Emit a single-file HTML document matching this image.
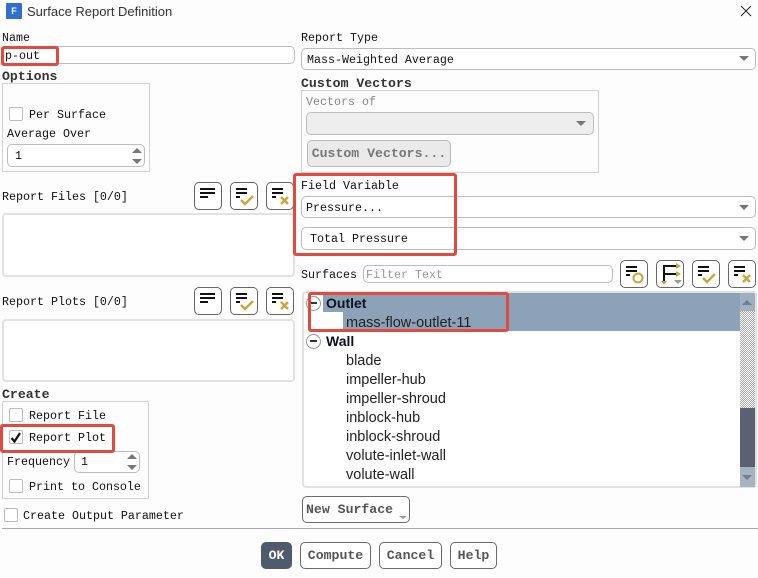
<!DOCTYPE html>
<html><head><meta charset="utf-8">
<style>
html,body{margin:0;padding:0}
body{width:758px;height:578px;position:relative;overflow:hidden;background:#fdfdfd;font-family:"Liberation Mono",monospace;font-size:11.67px;color:#111}
.a{position:absolute;box-sizing:border-box}
.t{position:absolute;line-height:14px;white-space:pre}
.b{font-weight:bold;color:#333;font-size:13.2px}
.box{position:absolute;box-sizing:border-box;border:1px solid #d2d2d2}
.inp{position:absolute;box-sizing:border-box;border:1px solid #bdbdbd;border-radius:5px;background:#fff}
.list{position:absolute;box-sizing:border-box;border:2px solid #e2e2e2;border-radius:4px;background:#fff}
.cb{position:absolute;box-sizing:border-box;width:14px;height:14px;border:1px solid #bbb;border-radius:2px;background:#fff}
.ib{position:absolute;box-sizing:border-box;width:28px;height:28px;border:1px solid #666;border-radius:5px;background:#fff}
.ib svg{position:absolute;left:-1px;top:-1px}
.btn{position:absolute;box-sizing:border-box;border:1px solid #6b6b6b;border-radius:5px;background:#fff;font-weight:bold;font-size:13.2px;color:#555;text-align:center;line-height:26px}
.tri{position:absolute;width:0;height:0;border-left:5px solid transparent;border-right:5px solid transparent;border-top:5px solid #777}
.up{position:absolute;width:0;height:0;border-left:5px solid transparent;border-right:5px solid transparent;border-bottom:5px solid #777}
.s{position:absolute;font-family:"Liberation Sans",sans-serif;font-size:14.5px;line-height:19px;color:#222;white-space:pre;margin-top:2px}
.h{font-weight:bold;font-size:14px;color:#0b1220;margin-top:1px}
.m{position:absolute;box-sizing:border-box;width:15px;height:15px;border:1px solid #999;border-radius:50%;background:#fff}
.m:after{content:"";position:absolute;left:3px;top:5px;width:7px;height:2px;background:#333}
.r{position:absolute;box-sizing:border-box;border:3px solid #e14b3f;border-radius:3px}
</style></head><body>

<!-- title bar -->
<div class="a" style="left:6px;top:3px;width:16px;height:16px;background:#2f6fd0;border-radius:1px;color:#fff;font:bold 9px/16px 'Liberation Sans',sans-serif;text-align:center">F</div>
<div class="t" style="left:27px;top:4px;font-family:'Liberation Sans',sans-serif;font-size:13px;line-height:16px;color:#333">Surface Report Definition</div>
<svg class="a" style="left:740px;top:5px" width="12" height="12"><path d="M1 1L11 11M11 1L1 11" stroke="#222" stroke-width="1" fill="none"/></svg>

<!-- left column -->
<div class="t" style="left:2px;top:31px">Name</div>
<div class="inp" style="left:2px;top:46px;width:293px;height:18px"></div>
<div class="t" style="left:5px;top:49px">p-out</div>

<div class="t b" style="left:2px;top:70px">Options</div>
<div class="box" style="left:2px;top:83px;width:148px;height:89px"></div>
<div class="cb" style="left:9px;top:107px"></div>
<div class="t" style="left:29px;top:108px">Per Surface</div>
<div class="t" style="left:7px;top:127px">Average Over</div>
<div class="inp" style="left:7px;top:144px;width:138px;height:23px"></div>
<div class="t" style="left:15px;top:149px">1</div>
<div class="up" style="left:132px;top:148px"></div>
<div class="tri" style="left:132px;top:159px"></div>

<div class="t" style="left:2px;top:190px">Report Files [0/0]</div>
<div class="ib" style="left:194px;top:182px"><svg width="28" height="28"><path d="M6 7H21M6 11H21M6 15H14" stroke="#111" stroke-width="2"/></svg></div>
<div class="ib" style="left:230px;top:182px"><svg width="28" height="28"><path d="M6 7H17M6 11H17M6 15H10" stroke="#111" stroke-width="2"/><path d="M11 18L15 22L23 14" stroke="#c9a63a" stroke-width="2.4" fill="none"/></svg></div>
<div class="ib" style="left:266px;top:182px"><svg width="28" height="28"><path d="M6 7H17M6 11H17M6 15H10" stroke="#111" stroke-width="2"/><path d="M15 15L22 22M22 15L15 22" stroke="#c9a63a" stroke-width="2.4" fill="none"/></svg></div>
<div class="list" style="left:2px;top:213px;width:293px;height:64px"></div>

<div class="t" style="left:2px;top:295px">Report Plots [0/0]</div>
<div class="ib" style="left:194px;top:287px"><svg width="28" height="28"><path d="M6 7H21M6 11H21M6 15H14" stroke="#111" stroke-width="2"/></svg></div>
<div class="ib" style="left:230px;top:287px"><svg width="28" height="28"><path d="M6 7H17M6 11H17M6 15H10" stroke="#111" stroke-width="2"/><path d="M11 18L15 22L23 14" stroke="#c9a63a" stroke-width="2.4" fill="none"/></svg></div>
<div class="ib" style="left:266px;top:287px"><svg width="28" height="28"><path d="M6 7H17M6 11H17M6 15H10" stroke="#111" stroke-width="2"/><path d="M15 15L22 22M22 15L15 22" stroke="#c9a63a" stroke-width="2.4" fill="none"/></svg></div>
<div class="list" style="left:2px;top:319px;width:293px;height:63px"></div>

<div class="t b" style="left:2px;top:388px">Create</div>
<div class="box" style="left:2px;top:401px;width:147px;height:98px"></div>
<div class="cb" style="left:9px;top:408px"></div>
<div class="t" style="left:29px;top:409px">Report File</div>
<div class="cb" style="left:9px;top:430px"></div>
<svg class="a" style="left:9px;top:430px" width="14" height="14"><path d="M2.5 8L5.5 11.5L11 3" stroke="#111" stroke-width="2.2" fill="none"/></svg>
<div class="t" style="left:29px;top:431px">Report Plot</div>
<div class="t" style="left:7px;top:455px">Frequency</div>
<div class="inp" style="left:74px;top:451px;width:66px;height:22px"></div>
<div class="t" style="left:81px;top:455px">1</div>
<div class="up" style="left:127px;top:454px"></div>
<div class="tri" style="left:127px;top:465px"></div>
<div class="cb" style="left:9px;top:479px"></div>
<div class="t" style="left:29px;top:480px">Print to Console</div>
<div class="cb" style="left:4px;top:508px"></div>
<div class="t" style="left:23px;top:509px">Create Output Parameter</div>

<div class="a" style="left:2px;top:528px;width:756px;height:1px;background:#aaa"></div>

<!-- bottom buttons -->
<div class="btn" style="left:261px;top:542px;width:31px;height:27px;background:#4f5b6c;border-color:#4f5b6c;color:#fff">OK</div>
<div class="btn" style="left:300px;top:542px;width:71px;height:27px">Compute</div>
<div class="btn" style="left:379px;top:542px;width:63px;height:27px">Cancel</div>
<div class="btn" style="left:450px;top:542px;width:47px;height:27px">Help</div>

<!-- right column -->
<div class="t" style="left:301px;top:31px">Report Type</div>
<div class="inp" style="left:301px;top:48px;width:455px;height:22px"></div>
<div class="t" style="left:307px;top:53px">Mass-Weighted Average</div>
<div class="tri" style="left:739px;top:56px"></div>

<div class="t b" style="left:301px;top:77px">Custom Vectors</div>
<div class="box" style="left:301px;top:90px;width:298px;height:83px"></div>
<div class="t" style="left:306px;top:95px;color:#888">Vectors of</div>
<div class="inp" style="left:306px;top:112px;width:288px;height:23px;background:#eee"></div>
<div class="tri" style="left:576px;top:121px"></div>
<div class="btn" style="left:307px;top:140px;width:144px;height:27px;background:#eaeaea;border-color:#bbb;color:#777">Custom Vectors...</div>

<div class="t" style="left:301px;top:179px">Field Variable</div>
<div class="inp" style="left:301px;top:196px;width:455px;height:22px"></div>
<div class="t" style="left:306px;top:201px">Pressure...</div>
<div class="tri" style="left:739px;top:205px"></div>
<div class="inp" style="left:301px;top:227px;width:455px;height:23px"></div>
<div class="t" style="left:310px;top:232px">Total Pressure</div>
<div class="tri" style="left:739px;top:236px"></div>

<div class="t" style="left:301px;top:268px">Surfaces</div>
<div class="inp" style="left:363px;top:265px;width:250px;height:18px"></div>
<div class="t" style="left:366px;top:268px;color:#999">Filter Text</div>

<div class="ib" style="left:620px;top:260px"><svg width="28" height="28"><path d="M6 7H17M6 11H17M6 15H10" stroke="#111" stroke-width="2"/><circle cx="18" cy="18" r="4.5" stroke="#c9a63a" stroke-width="2" fill="none"/></svg></div>
<div class="ib" style="left:656px;top:260px"><svg width="28" height="28"><path d="M8 23V6H20M8 14H20" stroke="#111" stroke-width="2" fill="none"/><path d="M20 3L25 6L20 9ZM20 11L25 14L20 17ZM5 21H11L8 25Z" fill="#c9a63a"/><path d="M18 20H26L22 24Z" fill="#999"/></svg></div>
<div class="ib" style="left:692px;top:260px"><svg width="28" height="28"><path d="M6 7H17M6 11H17M6 15H10" stroke="#111" stroke-width="2"/><path d="M11 18L15 22L23 14" stroke="#c9a63a" stroke-width="2.4" fill="none"/></svg></div>
<div class="ib" style="left:728px;top:260px"><svg width="28" height="28"><path d="M6 7H17M6 11H17M6 15H10" stroke="#111" stroke-width="2"/><path d="M15 15L22 22M22 15L15 22" stroke="#c9a63a" stroke-width="2.4" fill="none"/></svg></div>

<!-- tree -->
<div class="list" style="left:302px;top:291px;width:455px;height:197px"></div>
<div class="a" style="left:323px;top:293px;width:417px;height:19px;background:#8ba2b8"></div>
<div class="a" style="left:343px;top:312px;width:397px;height:19px;background:#8ba2b8"></div>
<div class="a" style="left:740px;top:293px;width:15px;height:18px;background:#9fb0c0"></div>
<div class="up" style="left:742px;top:300px;border-bottom-color:#6f7f8f"></div>
<svg class="a" style="left:740px;top:311px" width="15" height="97"><defs><pattern id="d" width="2" height="2" patternUnits="userSpaceOnUse"><rect width="2" height="2" fill="#fff"/><rect width="1" height="1" fill="#aaa"/><rect x="1" y="1" width="1" height="1" fill="#aaa"/></pattern></defs><rect width="15" height="97" fill="url(#d)"/></svg>
<div class="a" style="left:740px;top:408px;width:15px;height:59px;background:#5b6172"></div>
<div class="a" style="left:740px;top:467px;width:15px;height:20px;background:#a6b3c0"></div>
<div class="tri" style="left:742px;top:475px;border-top-color:#6f7f8f"></div>

<div class="m" style="left:306px;top:296px"></div>
<div class="s h" style="left:326px;top:293px">Outlet</div>
<div class="s" style="left:346px;top:312px">mass-flow-outlet-11</div>
<div class="m" style="left:306px;top:334px"></div>
<div class="s h" style="left:326px;top:331px">Wall</div>
<div class="s" style="left:346px;top:350px">blade</div>
<div class="s" style="left:346px;top:369px">impeller-hub</div>
<div class="s" style="left:346px;top:388px">impeller-shroud</div>
<div class="s" style="left:346px;top:407px">inblock-hub</div>
<div class="s" style="left:346px;top:426px">inblock-shroud</div>
<div class="s" style="left:346px;top:445px">volute-inlet-wall</div>
<div class="s" style="left:346px;top:464px">volute-wall</div>

<div class="btn" style="left:302px;top:496px;width:108px;height:27px;text-align:left;padding-left:3px">New Surface</div>
<div class="a" style="left:399px;top:516px;width:0;height:0;border-left:4px solid transparent;border-right:4px solid transparent;border-top:3px solid #999"></div>

<!-- red annotation rectangles -->
<div class="r" style="left:1px;top:46px;width:58px;height:20px"></div>
<div class="r" style="left:0;top:424px;width:115px;height:29px"></div>
<div class="r" style="left:293px;top:173px;width:164px;height:83px"></div>
<div class="r" style="left:308px;top:292px;width:201px;height:40px"></div>

</body></html>
